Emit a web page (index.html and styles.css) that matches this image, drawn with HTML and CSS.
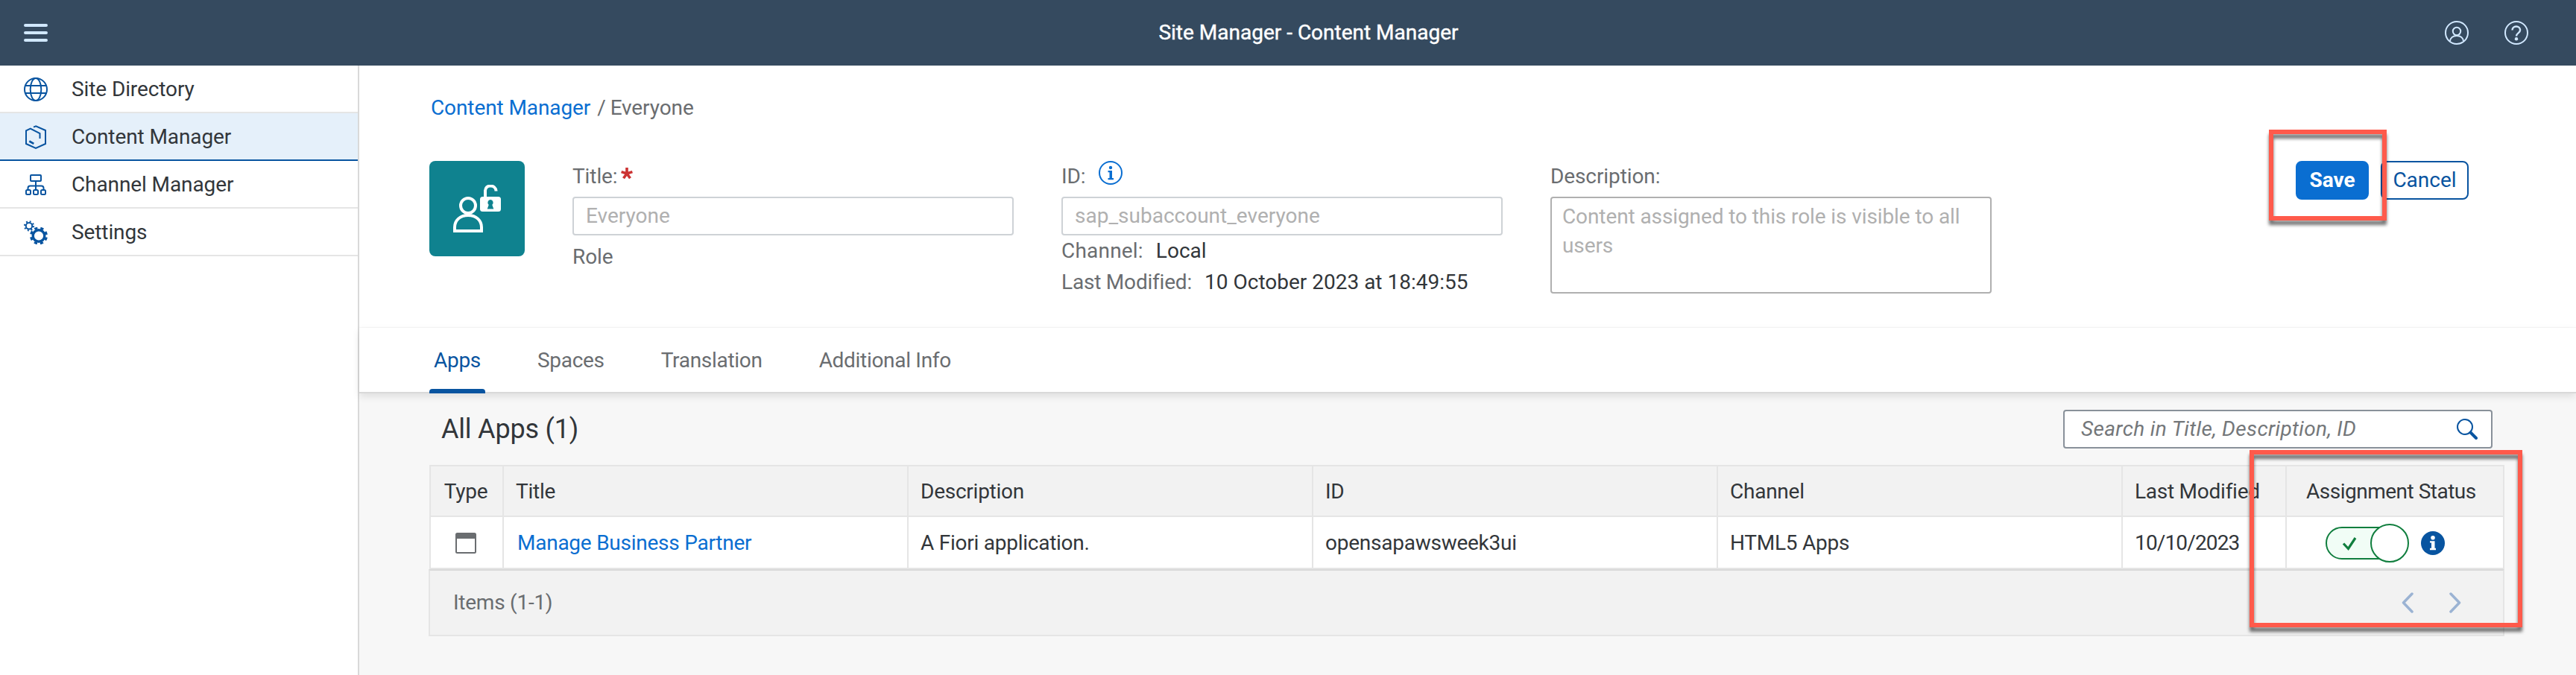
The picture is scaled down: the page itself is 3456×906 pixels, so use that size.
FILE: index.html
```html
<!DOCTYPE html>
<html lang="en">
<head>
<meta charset="utf-8">
<title>Site Manager - Content Manager</title>
<link rel="stylesheet" href="styles.css">
</head>
<body>
<header class="shell">
  <svg class="shell-menu" viewBox="0 0 32 32"><path d="M2 6h28M2 16h28M2 26h28" stroke="#d1e8ff" stroke-width="4" stroke-linecap="round"/></svg>
  <h1 class="shell-title">Site Manager - Content Manager</h1>
  <div class="shell-actions">
    <svg class="icon" viewBox="0 0 32 32" fill="none" stroke="#d1e8ff" stroke-width="2"><circle cx="16" cy="16" r="15"/><circle cx="16" cy="14" r="5.2"/><path d="M7 27.500c.3-4.700 3.800-7.500 9-7.500s8.700 2.800 9 7.500"/></svg>
    <svg class="icon" viewBox="0 0 32 32" fill="none" stroke="#d1e8ff" stroke-width="2"><circle cx="16" cy="16" r="15"/><path d="M10.500 12.500c0-3.200 2.300-5 5.300-5s5.300 1.900 5.300 4.700c0 4.300-5.100 4-5.100 8.300" stroke-width="2.400"/><circle cx="16" cy="24.200" r="2.200" fill="#d1e8ff" stroke="none"/></svg>
  </div>
</header>
<div class="layout">
  <nav class="side">
    <a class="side-item">
      <svg class="icon" viewBox="0 0 32 32" fill="none" stroke="#0854a0" stroke-width="2"><circle cx="16" cy="16" r="15"/><ellipse cx="16" cy="16" rx="7.300" ry="15"/><path d="M2 11h28M2 21h28"/></svg>
      <span>Site Directory</span></a>
    <a class="side-item selected">
      <svg class="icon" viewBox="0 0 32 32" fill="none" stroke="#0854a0" stroke-width="2"><path d="M13 2.700 16.200 1.300 29 7v18L16 30.800 3 25V7.300L8.800 4.500 21.500 11v7"/><path d="M7.300 21.500l6 3.300" stroke-width="2.600"/></svg>
      <span>Content Manager</span></a>
    <a class="side-item">
      <svg class="icon" viewBox="0 0 32 32" fill="none" stroke="#0854a0" stroke-width="2"><rect x="9" y="3" width="14" height="8" rx="1"/><rect x="3" y="23" width="6" height="6" rx="1.500"/><rect x="13" y="23" width="6" height="6" rx="1.500"/><rect x="23" y="23" width="6" height="6" rx="1.500"/><path d="M16 11v12M5.500 23v-2.500q0-3 3-3h15q3 0 3 3V23"/></svg>
      <span>Channel Manager</span></a>
    <a class="side-item">
      <svg class="icon" viewBox="0 0 32 32" fill="none" stroke="#0854a0"><circle cx="7" cy="7.300" r="4.200" stroke-width="2"/><circle cx="7" cy="7.300" r="6" stroke-width="2.200" stroke-dasharray="1.900 2.812"/><circle cx="20" cy="20.500" r="7.800" stroke-width="3.400"/><circle cx="20" cy="20.500" r="10.500" stroke-width="3" stroke-dasharray="4.200 4.047" stroke-dashoffset="6.220"/></svg>
      <span>Settings</span></a>
  </nav>
  <main class="main">
    <section class="object-header">
      <div class="crumbs"><a class="link">Content Manager</a><span class="crumb-sep">/</span><span class="crumb-here">Everyone</span></div>
      <div class="object-row">
        <div class="avatar">
          <svg viewBox="0 0 64 64" fill="none" stroke="#fff" stroke-width="4"><ellipse cx="20" cy="28" rx="10" ry="10"/><path d="M2 62v-5c0-9 7-16 18-16s18 7 18 16v5z"/><path d="M43 18V8.500C43 4 46 1.500 50 1.500s7.500 2.700 7.500 7"/><rect x="36" y="16" width="28" height="20" rx="3.500" fill="#fff" stroke="none"/><path d="M50 20a4 4 0 0 1 2.300 7l2 5.500h-8.600l2-5.500A4 4 0 0 1 50 20z" fill="#0f828f" stroke="none"/></svg>
        </div>
        <div class="field">
          <div class="label">Title:<svg class="star" viewBox="0 0 16 16"><path d="M8 8V0M8 8 .6 5.600M8 8l7.400-2.400M8 8l-4.500 6.300M8 8l4.500 6.300" stroke="#cc3333" stroke-width="3.600"/></svg></div>
          <div class="input">Everyone</div>
          <div class="meta role"><span>Role</span></div>
        </div>
        <div class="field">
          <div class="label">ID:<svg class="icon info" viewBox="0 0 32 32" fill="none"><circle cx="16" cy="16" r="15" stroke="#0a6ed1" stroke-width="2"/><circle cx="16" cy="9" r="2.200" fill="#0a6ed1"/><path d="M12.500 13h5.500v10h2v2.200h-7.500V23H14.500v-7.700h-2z" fill="#0a6ed1"/></svg></div>
          <div class="input">sap_subaccount_everyone</div>
          <div class="meta channel"><span>Channel:</span><b class="value">Local</b></div>
          <div class="meta modified"><span>Last Modified:</span><b class="value">10 October 2023 at 18:49:55</b></div>
        </div>
        <div class="field">
          <div class="label">Description:</div>
          <div class="textarea">Content assigned to this role is visible to all users</div>
        </div>
        <div class="actions">
          <button class="btn primary">Save</button>
          <button class="btn">Cancel</button>
          <div class="mark mark-save"></div>
        </div>
      </div>
    </section>
    <nav class="tabs">
      <a class="tab active">Apps</a><a class="tab">Spaces</a><a class="tab">Translation</a><a class="tab">Additional Info</a>
    </nav>
    <section class="content">
      <div class="toolbar">
        <h2 class="toolbar-title">All Apps (1)</h2>
        <div class="search"><span>Search in Title, Description, ID</span>
          <svg viewBox="0 0 28 28" fill="none" stroke="#0854a0"><circle cx="11" cy="11" r="10" stroke-width="2"/><path d="M18.500 18.500l7.500 7.500" stroke-width="4" stroke-linecap="round"/></svg>
        </div>
      </div>
      <div class="table">
        <div class="tr head">
          <div class="td center">Type</div><div class="td">Title</div><div class="td">Description</div><div class="td">ID</div><div class="td">Channel</div><div class="td nowrap">Last Modified</div><div class="td assign-head">Assignment Status</div>
        </div>
        <div class="tr">
          <div class="td center"><svg class="app-icon" viewBox="0 0 28 28"><rect x="1" y="1" width="26" height="26" rx="1.500" fill="#fff" stroke="#6a6d70" stroke-width="2"/><path d="M1 1h26v7H1z" fill="#6a6d70"/></svg></div>
          <div class="td"><a class="link title-link">Manage Business Partner</a></div><div class="td">A Fiori application.</div><div class="td">opensapawsweek3ui</div><div class="td">HTML5 Apps</div><div class="td date">10/10/2023</div>
          <div class="td status">
            <svg class="switch" viewBox="0 0 112 52"><rect x="1" y="5" width="100" height="42" rx="21" fill="#f1fdf6" stroke="#107e3e" stroke-width="2"/><path d="M24 26.500l6.500 7L40 19" fill="none" stroke="#107e3e" stroke-width="3.200"/><circle cx="86" cy="26" r="25" fill="#fff" stroke="#107e3e" stroke-width="2"/></svg>
            <svg class="icon" viewBox="0 0 32 32"><circle cx="16" cy="16" r="16" fill="#0854a0"/><circle cx="16" cy="8.800" r="2.800" fill="#fff"/><path d="M12 13.200h6.500v9.600H20v2.400h-8v-2.400h2v-7.200h-2z" fill="#fff"/></svg>
          </div>
        </div>
        <div class="foot"><span>Items (1-1)</span>
          <div class="pager"><svg viewBox="0 0 16 28"><path d="M14 2 2.500 14 14 26"/></svg><svg viewBox="0 0 16 28"><path d="M2 2l11.500 12L2 26"/></svg></div>
        </div>
        <div class="mark mark-status"></div>
      </div>
    </section>
  </main>
</div>
</body>
</html>
```
FILE: styles.css
```css
* { box-sizing: border-box; }
body { margin: 0; width: 3456px; height: 906px; overflow: hidden; background: #fff; color: #32363a; font: 28px/32px Roboto, "Open Sans", sans-serif; letter-spacing: -.1px; }
svg { display: block; flex: none; }
.icon { width: 32px; height: 32px; }
.link { color: #0a6ed1; }

.shell { display: grid; grid-template-columns: 1fr auto 1fr; align-items: center; height: 88px; padding: 0 64px 0 32px; background: #354a5f; }
.shell-menu { width: 32px; height: 32px; }
.shell-title { margin: 0 0 0 87px; color: #fff; font-size: 28px; font-weight: 400; letter-spacing: 0; -webkit-text-stroke: .4px #fff; }
.shell-actions { display: flex; justify-content: flex-end; gap: 48px; }

.layout { display: flex; height: 818px; }
.side { width: 482px; flex: none; border-right: 2px solid #d9d9d9; background: #fff; }
.side-item { display: flex; align-items: center; gap: 32px; height: 64px; padding: 2px 0 0 32px; border-bottom: 2px solid #e5e5e5; }
.side-item.selected { background: #e5f0fa; border-bottom-color: #0854a0; }

.main { flex: 1; display: flex; flex-direction: column; background: #f7f7f7; }
.object-header { height: 352px; padding: 41px 144px 0 94px; background: #fff; border-bottom: 1px solid #f7f7f7; }
.crumbs { display: flex; height: 87px; padding-left: 2px; color: #6a6d70; }
.crumb-sep { margin: 0 6px 0 9px; }
.object-row { display: flex; gap: 64px; }
.avatar { display: grid; place-items: center; width: 128px; height: 128px; border-radius: 8px; background: #0f828f; }
.avatar svg { width: 64px; height: 64px; }
.field { width: 592px; }
.label { display: flex; height: 48px; padding-top: 5px; color: #6a6d70; }
.star { width: 16px; height: 16px; margin: 4px 0 0 4px; }
.info { margin: -5px 0 0 18px; }
.input { height: 52px; padding: 8px 16px; border: 2px solid #ced2d6; border-radius: 4px; color: #b0b0b0; letter-spacing: 0; }
.textarea { height: 130px; padding: 5px 14px; border: 2px solid #b0b0b0; border-radius: 4px; color: #b0b0b0; line-height: 39px; }
.meta { display: flex; color: #6a6d70; }
.role { padding-top: 13px; }
.channel { padding-top: 5px; letter-spacing: .2px; }
.modified { padding-top: 10px; letter-spacing: -.2px; }
.value { margin-left: 17px; color: #32363a; font-weight: 400; letter-spacing: 0; }
.actions { position: relative; display: flex; align-items: flex-start; gap: 16px; margin-left: auto; }
.btn { height: 52px; width: 118px; padding: 0; border: 2px solid #0854a0; border-radius: 8px; background: #fff; color: #0854a0; font: 28px/32px Roboto, sans-serif; }
.btn.primary { width: 98px; border-color: #0a6ed1; background: #0a6ed1; color: #fff; font-weight: 700; }
.mark { position: absolute; border: 6px solid #ff5a4b; filter: drop-shadow(0 6px 2px rgba(0, 0, 0, .55)); }
.mark-save { left: -36px; top: -42px; width: 158px; height: 122px; }

.tabs { display: flex; gap: 64px; height: 88px; padding: 0 94px; background: #fff; border-bottom: 2px solid #d9d9d9; box-shadow: 0 4px 10px rgba(0, 0, 0, .1); letter-spacing: -.3px; }
.tab { height: 88px; padding: 28px 6px 0; color: #6a6d70; }
.tab.active { color: #0854a0; position: relative; }
.tab.active::after { content: ""; position: absolute; left: 0; right: 0; bottom: 0; height: 6px; border-radius: 4px 4px 0 0; background: #0854a0; }

.content { padding: 22px 96px 0 94px; }
.toolbar { display: flex; justify-content: space-between; height: 74px; padding: 0 16px; }
.toolbar-title { margin: 2px 0 0; font-size: 36px; line-height: 48px; font-weight: 400; letter-spacing: -.2px; }
.search { display: flex; justify-content: space-between; align-items: center; width: 576px; height: 52px; padding: 0 18px 0 22px; border: 2px solid #89919a; border-radius: 4px; background: #fff; color: #74777a; font-style: italic; letter-spacing: .35px; }
.search svg { width: 28px; height: 28px; margin-top: -1px; }

.table { position: relative; width: 2784px; border-top: 2px solid #e5e5e5; letter-spacing: -.25px; }
.tr { display: grid; grid-template-columns: 100px repeat(4, 543px) 220px 292px; height: 70px; background: #fff; border-bottom: 2px solid #e5e5e5; box-shadow: inset 2px 0 #e5e5e5; }
.tr.head { height: 68px; background: #f2f2f2; }
.td { display: flex; align-items: center; padding: 2px 0 0 16px; border-right: 2px solid #e5e5e5; }
.td.center { justify-content: center; padding: 2px 0 0; }
.td.nowrap { white-space: nowrap; }
.td.date { letter-spacing: -.85px; }
.title-link { padding-left: 2px; }
.td.assign-head { padding-left: 26px; white-space: nowrap; letter-spacing: -.5px; }
.app-icon { width: 28px; height: 28px; }
.td.status { gap: 16px; padding-left: 52px; }
.switch { width: 112px; height: 52px; }
.foot { display: flex; align-items: center; justify-content: space-between; height: 90px; margin-left: -1px; padding: 0 56px 0 31px; background: #f2f2f2; border: 2px solid #e5e5e5; border-top-color: #d9d9d9; color: #6a6d70; }
.pager { display: flex; gap: 48px; }
.pager svg { width: 16px; height: 28px; fill: none; stroke: #9bb3d3; stroke-width: 3.500; stroke-linecap: round; stroke-linejoin: round; }
.mark-status { left: 2442px; top: -22px; width: 366px; height: 238px; }
```
